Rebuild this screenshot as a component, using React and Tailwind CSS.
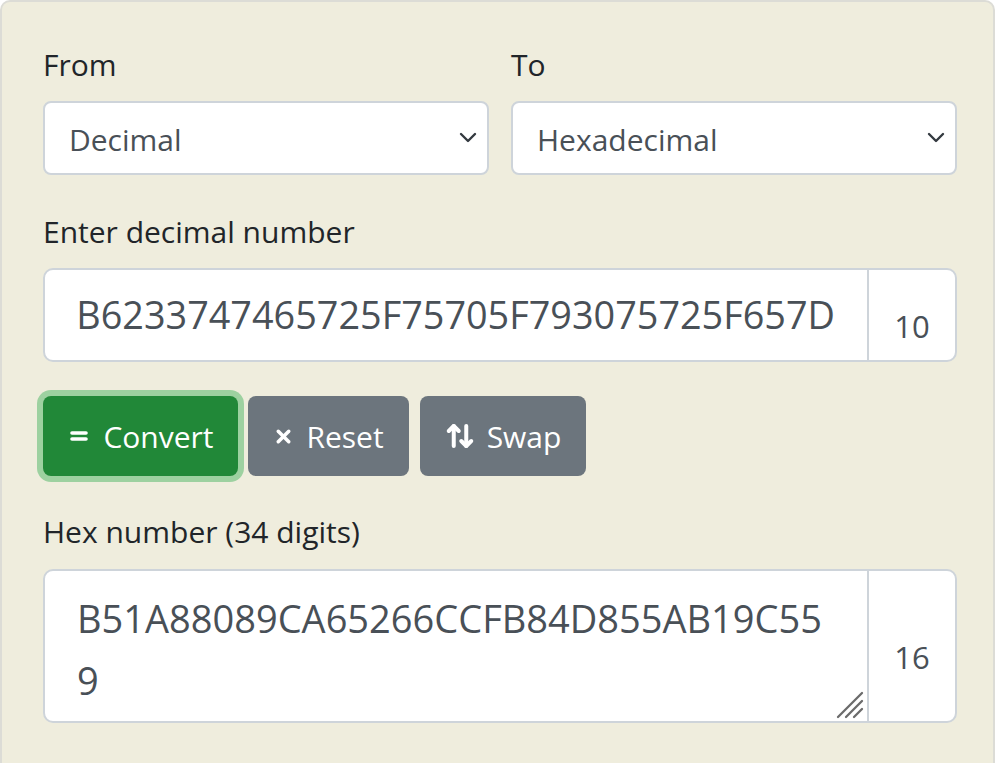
import React from 'react';
import { Equal, X, ArrowUpDown } from 'lucide-react';

const font = { fontFamily: '"Open Sans", "Noto Sans", sans-serif' };

const Chevron = () => (
  <svg width="18" height="12" viewBox="0 0 18 12" className="shrink-0">
    <path d="M2 2l7 7 7-7" fill="none" stroke="#343a40" strokeWidth="2.4" strokeLinecap="round" strokeLinejoin="round" />
  </svg>
);

const Grip = () => (
  <svg width="28" height="28" viewBox="0 0 28 28" className="absolute right-[5px] bottom-[4px] pointer-events-none">
    <path d="M2 26L26 2M10 26L26 10M18 26L26 18" stroke="#6b6b6b" strokeWidth="2.3" strokeLinecap="round" />
  </svg>
);

const SelectBox = ({ label, value }) => (
  <div className="flex flex-col">
    <label className="text-[30px] leading-[46px] text-[#212529] mb-[13px]">{label}</label>
    <div className="h-[74px] flex items-center justify-between rounded-[8px] border-2 border-[#ced4da] bg-white pl-[24px] pr-[10px]">
      <span className="text-[30px] text-[#495057] pt-[3px]">{value}</span>
      <Chevron />
    </div>
  </div>
);

const App = () => {
  return (
    <div className="min-h-screen bg-white" style={font}>
      <div className="h-[763px] rounded-t-[10px] border-2 border-b-0 border-[#dcdcd6] bg-[#efeddd] pl-[41px] pr-[36px] pt-[40px]">
        {/* from / to */}
        <div className="grid grid-cols-2 gap-[22px]">
          <SelectBox label="From" value="Decimal" />
          <SelectBox label="To" value="Hexadecimal" />
        </div>

        {/* input */}
        <div className="mt-[34px]">
          <label className="block text-[30px] leading-[46px] text-[#212529] mb-[13px]">Enter decimal number</label>
          <div className="flex h-[94px]">
            <div className="flex-1 min-w-0 flex items-center rounded-l-[10px] border-2 border-[#ced4da] bg-white px-[32px]">
              <div className="w-full overflow-hidden whitespace-nowrap flex justify-end text-[37.8px] text-[#495057]">
                <span>7B6233747465725F75705F793075725F657D</span>
              </div>
            </div>
            <div className="w-[90px] -ml-[2px] flex items-center justify-center pt-[22px] rounded-r-[10px] border-2 border-[#ced4da] bg-white text-[31px] text-[#495057]">
              10
            </div>
          </div>
        </div>

        {/* buttons */}
        <div className="mt-[34px] flex gap-[10px] text-[30px] text-white">
          <button className="h-[80px] w-[195px] flex items-center justify-center gap-[12px] rounded-[8px] bg-[#218838] shadow-[0_0_0_6px_#9dd1a0]">
            <Equal size={24} strokeWidth={3.6} />
            <span>Convert</span>
          </button>
          <button className="h-[80px] w-[161px] flex items-center justify-center gap-[12px] rounded-[8px] bg-[#6c757d]">
            <X size={21} strokeWidth={4} />
            <span>Reset</span>
          </button>
          <button className="h-[80px] w-[166px] ml-[1px] flex items-center justify-center gap-[12px] rounded-[8px] bg-[#6c757d]">
            <ArrowUpDown size={30} strokeWidth={3.2} />
            <span>Swap</span>
          </button>
        </div>

        {/* output */}
        <div className="mt-[33px]">
          <label className="block text-[30px] leading-[46px] text-[#212529] mb-[14px]">Hex number (34 digits)</label>
          <div className="flex h-[154px]">
            <div className="relative flex-1 min-w-0 flex">
              <textarea
                readOnly
                defaultValue="B51A88089CA65266CCFB84D855AB19C559"
                className="w-full resize-none break-all rounded-l-[10px] border-2 border-[#ced4da] bg-white px-[32px] pt-[16px] text-[38px] leading-[62px] text-[#495057] outline-none"
              />
              <Grip />
            </div>
            <div className="w-[90px] -ml-[2px] flex items-center justify-center pt-[22px] rounded-r-[10px] border-2 border-[#ced4da] bg-white text-[31px] text-[#495057]">
              16
            </div>
          </div>
        </div>
      </div>
    </div>
  );
};

export default App;
